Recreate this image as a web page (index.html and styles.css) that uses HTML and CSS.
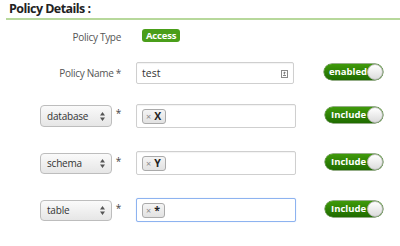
FILE: index.html
```html
<!DOCTYPE html>
<html>
<head>
<meta charset="utf-8">
<link rel="stylesheet" href="styles.css">
</head>
<body>
<div class="panel">
  <h3 class="title">Policy Details :</h3>
  <div class="row r1">
    <div class="label">Policy Type</div>
    <div class="field"><span class="badge">Access</span></div>
  </div>
  <div class="row r2">
    <div class="label">Policy Name *</div>
    <div class="field">
      <div class="input name">
        <span class="text">test</span>
        <svg class="autofill" width="7" height="8" viewBox="0 0 7 8"><rect x="0.5" y="0.5" width="6" height="7" fill="#fff" stroke="#8a8a8a"/><path d="M3.5 2v2.5M2.3 3.2L3.5 2l1.2 1.2M2 5.5h3" stroke="#777" fill="none" stroke-width="0.9"/></svg>
      </div>
    </div>
    <div class="toggle enabled"><span>enabled</span><i class="knob"></i></div>
  </div>
  <div class="row r3">
    <div class="label"><div class="select"><span>database</span><svg class="arrows" width="5" height="9" viewBox="0 0 5 9"><path d="M0 3.5L2.5 0L5 3.5ZM0 5.5L2.5 9L5 5.5Z" fill="#555"/></svg></div><span class="star">*</span></div>
    <div class="field"><div class="input tags"><span class="tag"><b class="x">×</b>X</span></div></div>
    <div class="toggle"><span>Include</span><i class="knob"></i></div>
  </div>
  <div class="row r4">
    <div class="label"><div class="select"><span>schema</span><svg class="arrows" width="5" height="9" viewBox="0 0 5 9"><path d="M0 3.5L2.5 0L5 3.5ZM0 5.5L2.5 9L5 5.5Z" fill="#555"/></svg></div><span class="star">*</span></div>
    <div class="field"><div class="input tags"><span class="tag"><b class="x">×</b>Y</span></div></div>
    <div class="toggle"><span>Include</span><i class="knob"></i></div>
  </div>
  <div class="row r5">
    <div class="label"><div class="select"><span>table</span><svg class="arrows" width="5" height="9" viewBox="0 0 5 9"><path d="M0 3.5L2.5 0L5 3.5ZM0 5.5L2.5 9L5 5.5Z" fill="#555"/></svg></div><span class="star">*</span></div>
    <div class="field"><div class="input tags focus"><span class="tag"><b class="x">×</b>*</span></div></div>
    <div class="toggle"><span>Include</span><i class="knob"></i></div>
  </div>
</div>
</body>
</html>
```
FILE: styles.css
```css
* { box-sizing: border-box; }
body {
  margin: 0;
  background: #fff;
  font-family: "Open Sans", "Liberation Sans", sans-serif;
  color: #333;
  width: 400px;
  height: 246px;
  overflow: hidden;
}
.title {
  margin: 0 0 0 6px;
  padding-left: 3px;
  height: 20px;
  line-height: 18px;
  font-size: 12.5px;
  letter-spacing: -0.55px;
  font-weight: 700;
  color: #222;
  border-bottom: 2px solid #b7d89b;
}
.row {
  display: flex;
  align-items: center;
  height: 24px;
}
.r1 { margin-top: 5px; }
.r2 { margin-top: 12px; }
.r3 { margin-top: 19px; }
.r4 { margin-top: 23px; }
.r5 { margin-top: 23px; }
.label {
  width: 121px;
  display: flex;
  justify-content: flex-end;
  align-items: center;
  font-size: 10px;
  letter-spacing: -0.3px;
  color: #555;
}
.star { width: 7px; align-self: flex-start; margin-top: 1px; text-align: right; color: #444; font-size: 10px; }
.field { width: 175px; padding-left: 15px; display: flex; align-items: center; }
.badge {
  display: inline-block;
  margin-left: 6px;
  margin-top: -4px;
  height: 13px;
  line-height: 13px;
  padding: 0 4px;
  border-radius: 3px;
  background: #4a9e1a;
  color: #fff;
  font-size: 9.5px;
  letter-spacing: -0.2px;
  font-weight: 700;
}
.input {
  height: 24px;
  width: 160px;
  border: 1px solid #cfcfcf;
  border-radius: 2px;
  background: #fff;
  display: flex;
  align-items: center;
  box-shadow: inset 0 1px 1px rgba(0,0,0,0.05);
}
.input.name { height: 22px; width: 158px; padding-left: 5px; font-size: 10.5px; color: #333; }
.input.name .text { flex: 1; }
.autofill { margin-right: 5px; margin-top: 1px; }
.input.tags { padding-left: 5px; }
.input.focus { border-color: #8db3f0; box-shadow: 0 0 1px #b4cdf6; }
.tag {
  display: inline-flex;
  align-items: center;
  height: 15px;
  padding: 0 4px 0 3px;
  border: 1px solid #aaa;
  border-radius: 3px;
  background: linear-gradient(#f4f4f4, #e2e2e2);
  font-size: 10.5px;
  font-weight: 700;
  color: #222;
}
.tag .x { font-weight: 400; color: #888; font-size: 9px; margin-right: 3px; }
.select {
  width: 72px;
  height: 22px;
  display: flex;
  align-items: center;
  justify-content: space-between;
  padding: 0 6px 0 6px;
  border: 1px solid #bdbdbd;
  border-radius: 4px;
  background: linear-gradient(#fafafa, #e6e6e6);
  font-size: 10px;
  letter-spacing: -0.2px;
  color: #333;
  margin-right: 2px;
}
.r4 .select, .r5 .select { height: 21px; }
.toggle {
  margin-bottom: 2px;
  position: relative;
  width: 59px;
  height: 16px;
  border-radius: 8px;
  background: linear-gradient(#3f9a0a, #1f6b00);
  color: #fff;
  font-size: 9.5px;
  font-weight: 700;
  line-height: 16px;
  padding-left: 6px;
  box-shadow: 0 0 0 0.5px #2b5d10;
}
.toggle.enabled { margin-left: 28px; padding-left: 5px; }
.toggle:not(.enabled) { margin-left: 29px; width: 58px; }
.knob {
  position: absolute;
  right: 0;
  top: 0;
  width: 16px;
  height: 16px;
  border-radius: 50%;
  background: linear-gradient(#ffffff, #dcdcdc);
  border: 1px solid #b8b8b8;
}
```
